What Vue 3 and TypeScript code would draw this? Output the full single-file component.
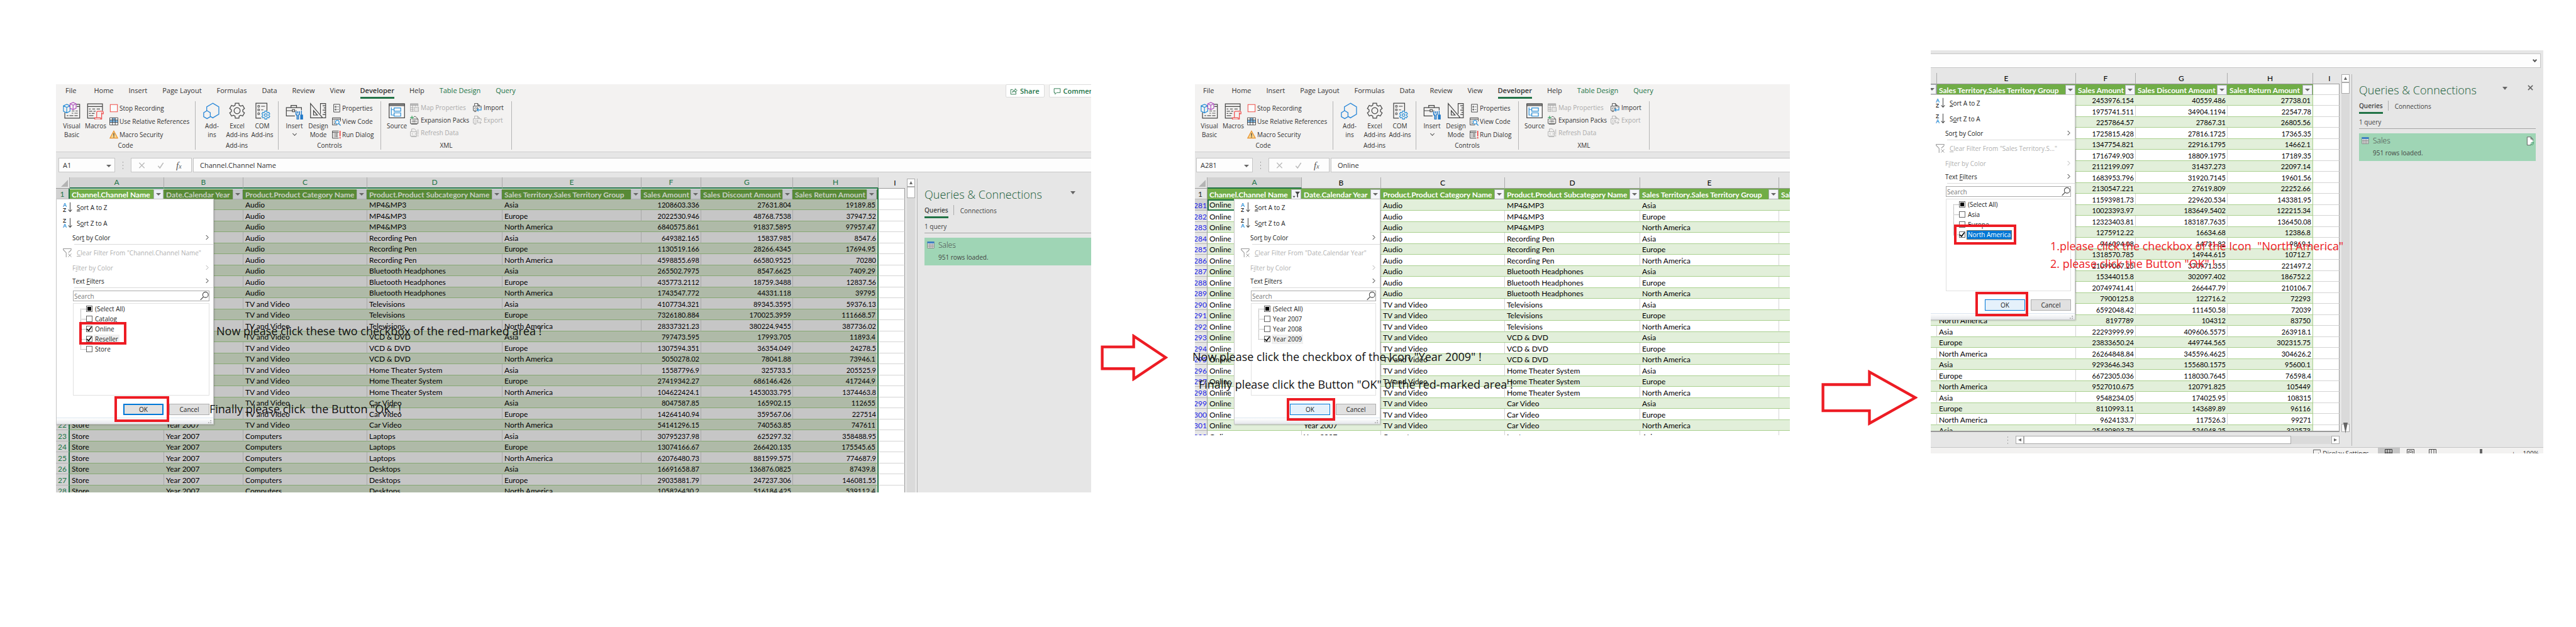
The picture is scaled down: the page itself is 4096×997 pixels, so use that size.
<script setup lang="ts">
interface SmallCommand { icon: string; label: string; off?: boolean }
interface BigCommand { icon: string; lines: string[]; caret?: boolean }
interface Group { name: string; cls: string; big: BigCommand[]; small: SmallCommand[][] }
interface Choice { label: string; state: 'on' | 'off' | 'mixed'; cls?: string }
interface Column { key: string; letter: string; title: string; num?: boolean; filtered?: boolean }
interface Row { head: string; cells: string[] }
interface Shot {
  id: string
  ribbon: boolean
  share: boolean
  nameBox: string
  formula: string
  columns: Column[]
  rows: Row[]
  pane: boolean
  spare: boolean
  footer: boolean
  clearText: string
  choices: Choice[]
  frames: string[]
  notes: string[]
}

const tabs = ['File', 'Home', 'Insert', 'Page Layout', 'Formulas', 'Data', 'Review', 'View', 'Developer', 'Help', 'Table Design', 'Query']

const groups: Group[] = [
  {
    name: 'Code', cls: 'g-code',
    big: [{ icon: 'vb', lines: ['Visual', 'Basic'] }, { icon: 'macros', lines: ['Macros'] }],
    small: [[
      { icon: 'stop', label: 'Stop Recording' },
      { icon: 'relative', label: 'Use Relative References' },
      { icon: 'warning', label: 'Macro Security' },
    ]],
  },
  {
    name: 'Add-ins', cls: 'g-addins',
    big: [
      { icon: 'addins', lines: ['Add-', 'ins'] },
      { icon: 'gear', lines: ['Excel', 'Add-ins'] },
      { icon: 'com', lines: ['COM', 'Add-ins'] },
    ],
    small: [],
  },
  {
    name: 'Controls', cls: 'g-controls',
    big: [{ icon: 'toolbox', lines: ['Insert'], caret: true }, { icon: 'design', lines: ['Design', 'Mode'] }],
    small: [[
      { icon: 'props', label: 'Properties' },
      { icon: 'code', label: 'View Code' },
      { icon: 'dialog', label: 'Run Dialog' },
    ]],
  },
  {
    name: 'XML', cls: 'g-xml',
    big: [{ icon: 'source', lines: ['Source'] }],
    small: [
      [
        { icon: 'map', label: 'Map Properties', off: true },
        { icon: 'packs', label: 'Expansion Packs' },
        { icon: 'refresh', label: 'Refresh Data', off: true },
      ],
      [
        { icon: 'import', label: 'Import' },
        { icon: 'export', label: 'Export', off: true },
      ],
    ],
  },
]

const allColumns: Column[] = [
  { key: 'a', letter: 'A', title: 'Channel.Channel Name' },
  { key: 'b', letter: 'B', title: 'Date.Calendar Year' },
  { key: 'c', letter: 'C', title: 'Product.Product Category Name' },
  { key: 'd', letter: 'D', title: 'Product.Product Subcategory Name' },
  { key: 'e', letter: 'E', title: 'Sales Territory.Sales Territory Group' },
  { key: 'f', letter: 'F', title: 'Sales Amount', num: true },
  { key: 'g', letter: 'G', title: 'Sales Discount Amount', num: true },
  { key: 'h', letter: 'H', title: 'Sales Return Amount', num: true },
]

const products: [string, string][] = [
  ['Audio', 'MP4&MP3'],
  ['Audio', 'Recording Pen'],
  ['Audio', 'Bluetooth Headphones'],
  ['TV and Video', 'Televisions'],
  ['TV and Video', 'VCD & DVD'],
  ['TV and Video', 'Home Theater System'],
  ['TV and Video', 'Car Video'],
  ['Computers', 'Laptops'],
  ['Computers', 'Desktops'],
]
const regions = ['Asia', 'Europe', 'North America']

const storeFigures = `1208603.336 27631.804 19189.85
2022530.946 48768.7538 37947.52
6840575.861 91837.5895 97957.47
649382.165 15837.985 8547.6
1130519.166 28266.4345 17694.95
4598855.698 66580.9525 70280
265502.7975 8547.6625 7409.29
435773.2112 18759.3488 12837.56
1743547.772 44331.118 39795
4107734.321 89345.3595 59376.13
7326180.884 170025.3959 111668.57
28337321.23 380224.9455 387736.02
797473.595 17993.705 11893.4
1307594.351 36354.049 24278.5
5050278.02 78041.88 73946.1
15587796.9 325733.5 205525.9
27419342.27 686146.426 417244.9
104622424.1 1453033.795 1374463.8
8047587.85 165902.15 112655
14264140.94 359567.06 227514
54141296.15 740563.85 747611
30795237.98 625297.32 358488.95
13074166.67 266420.135 175545.65
62076480.73 881599.575 774687.9
16691658.87 136876.0825 87439.8
29035881.79 247237.306 146081.55
105826430.2 516184.425 539112.4`

const regionFigures = `2453976.154 40559.486 27738.01
1975741.511 34904.1194 22547.78
2257864.57 27867.31 26805.56
1725815.428 27816.1725 17365.35
1347754.821 22916.1795 14662.1
1716749.903 18809.1975 17189.35
2112199.097 31437.273 22097.14
1683953.796 31920.7145 19601.56
2130547.221 27619.809 22252.66
11593981.73 229620.534 143381.95
10023393.97 183649.5402 122215.34
12323403.81 183187.7635 136450.08
1275912.22 16634.68 12386.8
946094.08 14731.82 9869.1
1318570.785 14944.615 10712.7
21099067.25 370971.355 221497.2
15344015.8 302097.402 186752.2
20749741.41 266447.79 210106.7
7900125.8 122716.2 72293
6592048.42 111450.58 72039
8197789 104312 83750
22293999.99 409606.5575 263918.1
23833650.24 449744.565 302315.75
26264848.84 345596.4625 304626.2
9293646.343 155680.1575 95600.1
6672305.036 118030.7645 76598.4
9527010.675 120791.825 105449
9548234.05 174025.95 108315
8110993.11 143689.89 96116
9624133.7 117526.3 99271
25430893.75 524948.25 322573`

const parse = (text: string): string[][] => text.split('\n').map((line) => line.split(' '))

const storeRows: Row[] = parse(storeFigures).map((figures, i) => {
  const [category, sub] = products[Math.floor(i / 3)]
  return { head: String(i + 2), cells: ['Store', 'Year 2007', category, sub, regions[i % 3], ...figures] }
})

const onlineRows: Row[] = Array.from({ length: 22 }, (_, i) => {
  const [category, sub] = products[Math.floor(i / 3)]
  return { head: String(281 + i), cells: ['Online', 'Year 2007', category, sub, regions[i % 3], ''] }
})

const regionRows: Row[] = parse(regionFigures).map((figures, i) => ({
  head: '',
  cells: [regions[i % 3], ...figures],
}))

const shots: Shot[] = [
  {
    id: 'one', ribbon: true, share: true, nameBox: 'A1', formula: 'Channel.Channel Name',
    columns: allColumns, rows: storeRows, pane: true, spare: true, footer: false,
    clearText: 'lear Filter From "Channel.Channel Name"',
    choices: [
      { label: '(Select All)', state: 'mixed' },
      { label: 'Catalog', state: 'off' },
      { label: 'Online', state: 'on' },
      { label: 'Reseller', state: 'on', cls: 'hover' },
      { label: 'Store', state: 'off' },
    ],
    frames: ['choice', 'confirm'],
    notes: ['Now please click these two checkbox of the red-marked area !', 'Finally please click  the Button "OK" !'],
  },
  {
    id: 'two', ribbon: true, share: false, nameBox: 'A281', formula: 'Online',
    columns: allColumns.slice(0, 6).map((c, i) => ({ ...c, filtered: i === 0 })),
    rows: onlineRows, pane: false, spare: false, footer: false,
    clearText: 'lear Filter From "Date.Calendar Year"',
    choices: [
      { label: '(Select All)', state: 'mixed' },
      { label: 'Year 2007', state: 'off' },
      { label: 'Year 2008', state: 'off' },
      { label: 'Year 2009', state: 'on', cls: 'hover' },
    ],
    frames: ['confirm'],
    notes: ['Now please click the checkbox of the Icon "Year 2009" !', 'Finally please click the Button "OK" of the red-marked area !'],
  },
  {
    id: 'three', ribbon: false, share: false, nameBox: '', formula: '',
    columns: allColumns.slice(4), rows: regionRows, pane: true, spare: true, footer: true,
    clearText: 'lear Filter From "Sales Territory.S..."',
    choices: [
      { label: '(Select All)', state: 'mixed' },
      { label: 'Asia', state: 'off' },
      { label: 'Europe', state: 'off' },
      { label: 'North America', state: 'on', cls: 'picked' },
    ],
    frames: ['choice', 'confirm'],
    notes: ['1.please click the checkbox of the Icon  "North America"', '2. please click the Button "OK" !'],
  },
]

function gearPath(cx: number, cy: number, outer: number, inner: number): string {
  const points: string[] = []
  for (let i = 0; i < 6; i++) {
    const mid = (i * 60 - 90) * (Math.PI / 180)
    const spread: [number, number][] = [[-0.36, inner], [-0.24, outer], [0.24, outer], [0.36, inner]]
    for (const [turn, r] of spread) {
      points.push(`${(cx + r * Math.cos(mid + turn)).toFixed(2)} ${(cy + r * Math.sin(mid + turn)).toFixed(2)}`)
    }
  }
  return `M${points.join('L')}Z`
}
const bigGear = gearPath(16, 16, 14, 10.5)
const smallGear = gearPath(22.5, 24, 7.5, 5.5)
</script>

<template>
  <main class="page">
    <svg class="defs" aria-hidden="true">
      <symbol id="i-vb" viewBox="0 0 32 32">
        <path d="M3.500 19V29.500H30.500V4.500H24M25 8.500H30.500" fill="none" stroke="#444" stroke-width="1.400" />
        <path d="M16 16.500h5M23 16.500h4M16 20.500h3M21 20.500h6M7 25h3M12 25h7M21 25h6" stroke="#555" stroke-width="1.200" />
        <path d="M7 4.500l6 2.500v10l-6 3-6-3V7z M1 7l6 3 6-3 M7 10v10" fill="#f3f2f1" stroke="#2b8fd6" stroke-width="1.400" />
        <path d="M18.500 1l5.500 2.500v8l-5.500 2.500-5.500-2.500v-8z M13 3.500l5.500 2.500 5.500-2.500 M18.500 6v8" fill="#f3f2f1" stroke="#b052c0" stroke-width="1.400" />
      </symbol>
      <symbol id="i-macros" viewBox="0 0 32 32">
        <path d="M15 29.500H1.500V3.500H28.500V16M1.500 8.500H28.500" fill="none" stroke="#444" stroke-width="1.400" />
        <path d="M4 13h3M10 13h5M18 13h6M4 17h6M12 17h4M4 21h3M9 21h5M4 25h8" stroke="#555" stroke-width="1.200" />
        <path d="M18 28V19q0-2 2-2h8q2 0 2 2.500v2h-3V31q0 1-1.500 1H16q-2 0-2-3h11q0 3 1.500 3M27 21.500V19" fill="none" stroke="#ee4a4a" stroke-width="1.400" />
      </symbol>
      <symbol id="i-addins" viewBox="0 0 32 32">
        <path d="M17.500 2.500l11 6.500v13.500l-11 6.500-11-6.500V9z" fill="none" stroke="#2b88d8" stroke-width="1.500" />
        <path d="M7 16l6 3.500v7.500l-6 3.500-6-3.500v-7.500z" fill="#f3f2f1" stroke="#2b88d8" stroke-width="1.500" />
      </symbol>
      <symbol id="i-gear" viewBox="0 0 32 32">
        <path :d="bigGear" fill="none" stroke="#444" stroke-width="1.400" />
        <circle cx="16" cy="16" r="5.500" fill="none" stroke="#444" stroke-width="1.400" />
      </symbol>
      <symbol id="i-com" viewBox="0 0 32 32">
        <path d="M14 29.500H4.500V2.500H24.500V16" fill="none" stroke="#444" stroke-width="1.400" />
        <path d="M8 6.500h3v3h-3zM8 13h3v3h-3zM8 20h3v3h-3z" fill="none" stroke="#444" stroke-width="1.100" />
        <path d="M14 8h7M14 14.500h4" stroke="#444" stroke-width="1.200" />
        <path :d="smallGear" fill="#f3f2f1" stroke="#2b8fd6" stroke-width="1.400" />
        <circle cx="22.500" cy="24" r="2.500" fill="none" stroke="#2b8fd6" stroke-width="1.300" />
      </symbol>
      <symbol id="i-toolbox" viewBox="0 0 32 32">
        <path d="M17 25.500H1.500V10.500H29V15M10 10.500V6.500H20V10.500M1.500 16h11M18 16h2M12.500 14h4v4h-4z" fill="none" stroke="#444" stroke-width="1.400" />
        <path d="M19 17v5q0 2 2 2v8h2.500v-8q2-.5 2-2.500v-4.500M22.200 17v4" fill="none" stroke="#1f78c8" stroke-width="1.800" />
        <path d="M29 16v8M27.500 24h3.500v7.500h-3.500z" fill="#1f78c8" stroke="#1f78c8" stroke-width="1.500" />
      </symbol>
      <symbol id="i-design" viewBox="0 0 32 32">
        <path d="M2 3V29H24Z M7.500 16V24H14.500Z" fill="none" stroke="#444" stroke-width="1.400" />
        <path d="M20 22V3H29.500V29H25M24 7h5M26 11h3M24 15h5M26 19h3M24 23h5" fill="none" stroke="#444" stroke-width="1.300" />
      </symbol>
      <symbol id="i-source" viewBox="0 0 32 32">
        <path d="M2 3.500H30V29H2Z" fill="#fafafa" stroke="#444" stroke-width="1.400" />
        <path d="M2 3.500H30V7H2Z" fill="#888" stroke="#444" />
        <path d="M6 10v14h5M6 14h5M11 11h12v6h-12zM11 20h12v6h-12z" fill="none" stroke="#2b8fd6" stroke-width="1.400" />
      </symbol>
      <symbol id="i-stop" viewBox="0 0 16 16"><path d="M1.500 1.500h13v13h-13z" fill="#fbfbfb" stroke="#f0504a" stroke-width="1.200" /></symbol>
      <symbol id="i-relative" viewBox="0 0 16 16">
        <path d="M.5 1.500h15v13H.5z" fill="#fff" />
        <path d="M.5 5.500h15v4.500H.5zM5.500 1.500h5v4h-5z" fill="#83beec" />
        <path d="M.5 1.500h15v13H.5zM.5 5.500h15M.5 10h15M5.500 1.500v13M10.500 1.500v13" fill="none" stroke="#333" />
      </symbol>
      <symbol id="i-warning" viewBox="0 0 16 16">
        <path d="M8 1.500L15 14.500H1z" fill="#fbd58a" stroke="#e8912d" stroke-width="1.300" />
        <path d="M8 5.500v5M8 11.500v1.500" stroke="#333" stroke-width="1.400" />
      </symbol>
      <symbol id="i-props" viewBox="0 0 16 16">
        <path d="M3 1h11v14H3z" fill="#fafafa" stroke="#444" stroke-width="1.100" />
        <path d="M5.500 4.500h2v2h-2zM5.500 9.500h2v2h-2zM9.500 5.500h2.500M9.500 10.500h2.500" fill="none" stroke="#444" />
      </symbol>
      <symbol id="i-code" viewBox="0 0 16 16">
        <path d="M15.500 8V1.500H.5v13h9M.5 4h15M3 7h2M3 9.500h1.500M3 12h2.500" fill="none" stroke="#444" stroke-width="1.100" />
        <circle cx="9.500" cy="9.500" r="3.300" fill="#fafafa" stroke="#2b8fd6" stroke-width="1.300" />
        <path d="M12 12l3.500 3.500" stroke="#2b8fd6" stroke-width="1.500" />
      </symbol>
      <symbol id="i-dialog" viewBox="0 0 16 16">
        <path d="M12 1.500H.5v13h11.500M.5 4H12M3 6.500h1.500M5.500 6.500h5M3 9h1.500M5.500 9h5M3 11.500h1.500M5.500 11.500h5" fill="none" stroke="#444" stroke-width="1.100" />
        <path d="M14.500 1v10M14.500 12.500v2.500" stroke="#ee3b3b" stroke-width="1.800" />
      </symbol>
      <symbol id="i-map" viewBox="0 0 16 16">
        <path d="M.5 1h14v3H.5z" fill="#bbb" />
        <path d="M7 15H.5V1h14v5M.5 4h14M.5 8h6M.5 11.500h6M4.500 4v11M9.500 4v2M8 7.500h7.500V15H8zM10 10h1M12.500 10h1.500M10 12.500h1M12.500 12.500h1.500" fill="none" stroke="#a5a5a5" />
      </symbol>
      <symbol id="i-packs" viewBox="0 0 16 16">
        <path d="M7 1.500h3l3 3V6M.5 6H2M4 6h10.500v8H.5V6M2 15.500h11" fill="none" stroke="#444" />
        <path d="M5 8.500L3.500 10 5 11.500M10 8.500l1.500 1.500L10 11.500" fill="none" stroke="#444" />
        <circle cx="7.500" cy="10" r="1.300" fill="none" stroke="#444" />
        <path d="M3.500 0v6.500M.3 3.300h6.500" stroke="#2e9b57" stroke-width="1.200" />
      </symbol>
      <symbol id="i-refresh" viewBox="0 0 16 16">
        <path d="M3 6V1h5l3 3v2M.5 6H12v8H.5zM2 15.500h10M14.500 2v9M14.500 12v3" fill="none" stroke="#aaa" />
        <path d="M5 8.500L3.500 10 5 11.500M9 8.500l1.500 1.500L9 11.500" fill="none" stroke="#aaa" />
      </symbol>
      <symbol id="i-import" viewBox="0 0 16 16">
        <path d="M3 5V.5h5.500L12 4v1M8.500.5V4H12M7 13.500H.5V5.500h14.500V9M2 15.500h4" fill="none" stroke="#444" />
        <path d="M5 7.500L3 9.500l2 2M12 7.500l1 1" fill="none" stroke="#444" />
        <circle cx="8" cy="9.500" r="1.300" fill="none" stroke="#444" />
        <path d="M15 8v4.500H7.500M10 10l-2.500 2.500L10 15" fill="none" stroke="#2b8fd6" stroke-width="1.300" />
      </symbol>
      <symbol id="i-export" viewBox="0 0 16 16">
        <path d="M3 5V.5h5.500L12 4v1M8.500.5V4H12M7 13.500H.5V5.500h14.500V9M2 15.500h4" fill="none" stroke="#aaa" />
        <path d="M5 7.500L3 9.500l2 2" fill="none" stroke="#aaa" />
        <circle cx="8" cy="9.500" r="1.300" fill="none" stroke="#aaa" />
        <path d="M7.500 12.500H15M12.500 10l2.500 2.500-2.500 2.500" fill="none" stroke="#aaa" />
      </symbol>
      <symbol id="i-share" viewBox="0 0 16 16">
        <path d="M6 4.500H1.500v10h11V10M5 10.500q.5-5 6-5V2.500L15 6.500l-4 4V8q-4 0-6 2.500z" fill="none" stroke="#217346" stroke-width="1.200" />
      </symbol>
      <symbol id="i-comment" viewBox="0 0 16 16">
        <path d="M1.500 2.500h13v8.500H7L3.500 14.500V11h-2z" fill="none" stroke="#217346" stroke-width="1.200" />
      </symbol>
      <symbol id="i-arrowdown" viewBox="0 0 8 20"><path d="M4 1v17M.7 14.500L4 18.300l3.300-3.800" fill="none" stroke="#444" stroke-width="1.200" /></symbol>
      <symbol id="i-clear" viewBox="0 0 16 18">
        <path d="M14 5.500L15 3.500V1.500H.8v2L6 9v8M10 8.500L14 5" fill="none" stroke="#999" stroke-width="1.200" />
        <path d="M9.500 10.500l6 6M15.500 10.500l-6 6" stroke="#999" stroke-width="1.100" />
      </symbol>
      <symbol id="i-chevron" viewBox="0 0 6 10"><path d="M.8.8L5 5 .8 9.200" fill="none" stroke="currentColor" stroke-width="1.200" /></symbol>
      <symbol id="i-search" viewBox="0 0 16 16">
        <circle cx="10" cy="6" r="5" fill="none" stroke="#444" stroke-width="1.200" />
        <path d="M6.500 9.500L.8 15.300" stroke="#444" stroke-width="1.400" />
      </symbol>
      <symbol id="i-table" viewBox="0 0 14 14">
        <path d="M.5.5h13v13H.5z" fill="#fff" stroke="#666" />
        <path d="M0 0h14v4H0z" fill="#3f7fc4" />
        <path d="M.5 7h13M.5 10h13M4 4v9.500M7 4v9.500M10 4v9.500" stroke="#777" />
      </symbol>
      <symbol id="i-page" viewBox="0 0 14 18">
        <path d="M8 16.500H.8V1h7l4 4v3M7.800 1v4h4" fill="#fff" stroke="#555" stroke-width="1.100" />
        <path d="M13 10.500v2.500h-2.500M7.500 17v-2.500H10M7.500 12.800q2.500-3 5.300 0M7.700 14.700q2.500 3 5.300 0" fill="none" stroke="#4f9f74" stroke-width="1.200" />
      </symbol>
      <symbol id="i-funnel" viewBox="0 0 14 12">
        <path d="M5 .5h9L10.500 5v6.500L8.500 10V5z" fill="#444" />
        <path d="M.5 8.500h5L3 11.500z" fill="#444" />
      </symbol>
    </svg>

    <figure v-for="shot in shots" :key="shot.id" class="shot" :class="`shot-${shot.id}`">
      <div class="window">
        <header v-if="shot.ribbon" class="ribbon">
          <nav class="tabs">
            <button v-for="tab in tabs" :key="tab" type="button" class="tab"
              :class="{ current: tab === 'Developer', context: tab === 'Table Design' || tab === 'Query' }">{{ tab }}</button>
            <div v-if="shot.share" class="share">
              <button type="button"><svg><use href="#i-share" /></svg>Share</button>
              <button type="button"><svg><use href="#i-comment" /></svg>Comments</button>
            </div>
          </nav>
          <div class="groups">
            <section v-for="group in groups" :key="group.name" class="group" :class="group.cls">
              <div class="commands">
                <button v-for="b in group.big" :key="b.icon" type="button" class="big">
                  <svg><use :href="`#i-${b.icon}`" /></svg>
                  <span v-for="line in b.lines" :key="line">{{ line }}</span>
                  <i v-if="b.caret" class="angle"></i>
                </button>
                <div v-for="(stack, n) in group.small" :key="n" class="stack">
                  <button v-for="s in stack" :key="s.icon" type="button" class="small" :class="{ off: s.off }" :disabled="s.off">
                    <svg><use :href="`#i-${s.icon}`" /></svg>{{ s.label }}
                  </button>
                </div>
              </div>
              <h2>{{ group.name }}</h2>
            </section>
          </div>
        </header>

        <div class="formula-bar">
          <template v-if="shot.ribbon">
            <div class="name-box">
              <input type="text" :value="shot.nameBox" aria-label="Name box" readonly />
              <button type="button" aria-label="Cell names"><i class="caret"></i></button>
            </div>
            <span class="dots"><b></b><b></b><b></b></span>
            <div class="fx">
              <button type="button" aria-label="Cancel entry">
                <svg viewBox="0 0 12 12"><path d="M1 1l10 10M11 1L1 11" fill="none" stroke="#bbb" stroke-width="1.600" /></svg>
              </button>
              <button type="button" aria-label="Accept entry">
                <svg viewBox="0 0 12 12"><path d="M1 7l3.500 4L11 1" fill="none" stroke="#bbb" stroke-width="1.900" /></svg>
              </button>
              <button type="button" class="fn">f<sub>x</sub></button>
            </div>
          </template>
          <div class="formula">
            <input type="text" :value="shot.formula" aria-label="Formula" readonly />
            <button v-if="!shot.ribbon" type="button" aria-label="Expand formula bar"><i class="angle"></i></button>
          </div>
        </div>

        <div class="work">
          <div class="sheet">
            <div class="cells">
              <table>
                <colgroup>
                  <col class="w-head" />
                  <col v-for="c in shot.columns" :key="c.key" :class="`w-${c.key}`" />
                  <col v-if="shot.spare" class="w-spare" />
                </colgroup>
                <thead>
                  <tr class="letters">
                    <th class="corner"><i v-if="shot.ribbon"></i></th>
                    <th v-for="c in shot.columns" :key="c.key" :class="`l-${c.key}`">{{ c.letter }}</th>
                    <th v-if="shot.spare" class="spare">I</th>
                  </tr>
                  <tr class="titles">
                    <th class="num-head">
                      <template v-if="shot.ribbon">1</template>
                      <button v-else type="button" class="drop" aria-label="Filter"><i class="caret"></i></button>
                    </th>
                    <th v-for="c in shot.columns" :key="c.key" :class="`t-${c.key}`">
                      <div class="title-cell">
                        <span>{{ c.title }}</span>
                        <button type="button" class="drop" :aria-label="`Filter ${c.title}`">
                          <svg v-if="c.filtered"><use href="#i-funnel" /></svg>
                          <i v-else class="caret"></i>
                        </button>
                      </div>
                    </th>
                    <td v-if="shot.spare" class="spare"></td>
                  </tr>
                </thead>
                <tbody>
                  <tr v-for="(row, r) in shot.rows" :key="r">
                    <th class="num-head">{{ row.head }}</th>
                    <td v-for="(cell, n) in row.cells" :key="n" :class="{ num: shot.columns[n].num }">{{ cell }}</td>
                    <td v-if="shot.spare" class="spare"></td>
                  </tr>
                </tbody>
              </table>
            </div>
            <div v-if="shot.footer" class="hscroll">
              <span class="dots"><b></b><b></b><b></b></span>
              <button type="button" aria-label="Scroll left"><i class="tri left"></i></button>
              <div class="track"><div class="thumb"></div></div>
              <button type="button" aria-label="Scroll right"><i class="tri right"></i></button>
            </div>
          </div>
          <template v-if="shot.pane">
            <div class="vscroll">
              <button type="button" aria-label="Scroll up"><i class="tri up"></i></button>
              <div class="track"><div class="thumb"></div></div>
              <button v-if="shot.footer" type="button" aria-label="Scroll down"><i class="tri down"></i></button>
            </div>
            <aside class="pane">
              <div class="pane-head">
                <h1>Queries &amp; Connections</h1>
                <button type="button" class="pane-menu" aria-label="Pane options"><i class="caret"></i></button>
                <button v-if="shot.footer" type="button" class="pane-close" aria-label="Close pane">
                  <svg viewBox="0 0 10 10"><path d="M1 1l8 8M9 1L1 9" fill="none" stroke="#666" stroke-width="1.800" /></svg>
                </button>
              </div>
              <div class="pane-tabs">
                <button type="button" class="on">Queries</button>
                <button type="button">Connections</button>
              </div>
              <p class="count">1 query</p>
              <div class="query">
                <svg class="grid-icon"><use href="#i-table" /></svg>
                <div><strong>Sales</strong><p>951 rows loaded.</p></div>
                <svg v-if="shot.footer" class="page-icon"><use href="#i-page" /></svg>
              </div>
            </aside>
          </template>
        </div>

        <footer v-if="shot.footer" class="status">
          <span class="display">
            <svg viewBox="0 0 14 12"><path d="M6 11.500H.5V.5h13v5M7 8h3M10 6v4M8 10h4" fill="none" stroke="#444" /></svg>
            Display Settings
          </span>
          <button type="button" class="view on" aria-label="Normal view">
            <svg viewBox="0 0 12 12"><path d="M.5.5h11v11H.5zM.5 6h11M4 .5v11M8 .5v11" fill="none" stroke="#333" /></svg>
          </button>
          <button type="button" class="view" aria-label="Page layout view">
            <svg viewBox="0 0 12 12"><path d="M.5.5h11v11H.5zM3 3h6v8.500H3zM4.500 5.500h3M4.500 8h3" fill="none" stroke="#444" /></svg>
          </button>
          <button type="button" class="view" aria-label="Page break view">
            <svg viewBox="0 0 12 12"><path d="M.5 12V.5h11V12M4 .5V9M8 .5V9" fill="none" stroke="#444" /></svg>
          </button>
          <span class="zoom"><span>−</span><i></i><span>+</span></span>
          <span>100%</span>
        </footer>

        <div class="menu" role="menu">
          <button type="button" class="item sort"><span class="az"><b class="blue">A</b><b>Z</b></span><svg class="down"><use href="#i-arrowdown" /></svg><span><u>S</u>ort A to Z</span></button>
          <button type="button" class="item sort"><span class="az"><b>Z</b><b class="blue">A</b></span><svg class="down"><use href="#i-arrowdown" /></svg><span>S<u>o</u>rt Z to A</span></button>
          <button type="button" class="item sub"><span>Sor<u>t</u> by Color</span><svg><use href="#i-chevron" /></svg></button>
          <hr />
          <button type="button" class="item clear" disabled><svg class="funnel"><use href="#i-clear" /></svg><span><u>C</u>{{ shot.clearText }}</span></button>
          <button type="button" class="item sub faded" disabled><span>F<u>i</u>lter by Color</span><svg><use href="#i-chevron" /></svg></button>
          <button type="button" class="item sub"><span>Text <u>F</u>ilters</span><svg><use href="#i-chevron" /></svg></button>
          <hr />
          <label class="search"><input type="text" placeholder="Search" aria-label="Search" /><svg><use href="#i-search" /></svg></label>
          <ul class="choices">
            <li v-for="c in shot.choices" :key="c.label">
              <label :class="c.cls"><input type="checkbox" :class="c.state" :checked="c.state === 'on'" /><span>{{ c.label }}</span></label>
            </li>
          </ul>
          <div class="actions">
            <button type="button" class="ok">OK</button>
            <button type="button">Cancel</button>
          </div>
          <div class="grip"><svg viewBox="0 0 6 6"><path d="M4 0h2v2H4zM4 4h2v2H4zM0 4h2v2H0z" fill="#aaa" /></svg></div>
        </div>
      </div>
      <div v-for="f in shot.frames" :key="f" class="frame" :class="`frame-${f}`"></div>
      <p v-for="(note, n) in shot.notes" :key="n" class="note" :class="`note-${n + 1}`">{{ note }}</p>
    </figure>

    <svg class="arrow arrow-one" viewBox="0 0 124 87">
      <path d="M3 24H61V4L120 43.500 61 83V64H3Z" fill="none" stroke="#ed1c24" stroke-width="5" />
    </svg>
    <svg class="arrow arrow-two" viewBox="0 0 176 102">
      <path d="M3 27H88V4L172 51 88 98V75H3Z" fill="none" stroke="#ed1c24" stroke-width="5" />
    </svg>
  </main>
</template>

<style>
html,
body {
  margin: 0;
  background: #fff;
}
</style>

<style scoped>
.page {
  display: grid;
  grid-template-columns: 89fr 1646fr 165fr 946fr 224fr 974fr 52fr;
  grid-template-rows: minmax(0, 80fr) minmax(0, 54fr) minmax(0, 558fr) minmax(0, 29fr) minmax(0, 62fr) minmax(0, 214fr);
  height: 100vh;
  overflow: hidden;
  font-family: "Open Sans", "Noto Sans", sans-serif;
  font-size: 10px;
  line-height: 14px;
  color: #333;
}
.page * {
  box-sizing: border-box;
}
.defs {
  position: absolute;
  width: 0;
  height: 0;
}
button,
input {
  margin: 0;
  padding: 0;
  border: 0;
  border-radius: 0;
  background: none;
  font: inherit;
  color: inherit;
}
h1,
h2,
p,
ul,
figure {
  margin: 0;
  padding: 0;
}
.shot {
  position: relative;
  min-width: 0;
}
.shot-one { grid-area: 3 / 2 / 6 / 3; }
.shot-two { grid-area: 3 / 4 / 4 / 5; }
.shot-three { grid-area: 2 / 6 / 5 / 7; }
.window {
  position: relative;
  display: flex;
  flex-direction: column;
  height: 100%;
  overflow: hidden;
  background: #e6e6e6;
}

/* ribbon */
.ribbon {
  height: 108px;
  flex: none;
  background: #f3f2f1;
  border-bottom: 1px solid #cfcfcf;
}
.shot-two .ribbon,
.shot-two .formula-bar,
.shot-two .cells {
  margin-left: -2px;
}
.tabs {
  display: flex;
  gap: 24px;
  height: 23px;
  padding-left: 15px;
  font-size: 11px;
}
.tab {
  flex: none;
  border-bottom: 3px solid transparent;
  line-height: 20px;
  white-space: nowrap;
}
.tab:first-child {
  margin-right: 4px;
}
.tab.current {
  font-weight: 600;
  border-color: #217346;
}
.tab.context {
  color: #217346;
}
.share {
  display: flex;
  flex: none;
  gap: 7px;
  width: 136px;
  height: 21px;
  margin-left: auto;
}
.share button {
  display: flex;
  flex: none;
  align-items: center;
  gap: 4px;
  padding: 0 7px 0 6px;
  border: 1px solid #dcdcdc;
  border-radius: 2px;
  background: #fff;
  color: #217346;
  font-weight: 600;
}
.share svg {
  width: 12px;
  height: 12px;
}
.groups {
  display: flex;
  padding-top: 4px;
}
.group {
  display: flex;
  flex-direction: column;
  justify-content: space-between;
  height: 77px;
  border-right: 1px solid #b5b5b5;
}
.g-code { width: 222px; }
.g-addins { width: 132px; }
.g-controls { width: 163px; }
.g-xml { width: 208px; }
.group h2 {
  height: 11px;
  font-size: 10px;
  font-weight: 400;
  line-height: 8px;
  text-align: center;
}
.commands {
  display: flex;
  padding-left: 6px;
}
.big {
  display: flex;
  flex: none;
  flex-direction: column;
  align-items: center;
  width: 38px;
  line-height: 14px;
  white-space: nowrap;
}
.g-addins .big {
  width: 40px;
}
.big svg {
  width: 28px;
  height: 28px;
  margin: 1px 0 3px;
}
.angle {
  width: 5px;
  height: 5px;
  margin-top: 3px;
  border: solid #555;
  border-width: 0 1px 1px 0;
  transform: rotate(45deg);
}
.stack {
  display: flex;
  flex: none;
  flex-direction: column;
  padding-left: 3px;
}
.g-xml .stack {
  width: 100px;
  padding-left: 2px;
}
.g-xml .stack:last-child {
  width: 60px;
}
.small {
  display: flex;
  align-items: center;
  gap: 2px;
  height: 21px;
  white-space: nowrap;
}
.g-xml .small {
  height: 20px;
  gap: 3px;
}
.small svg {
  width: 14px;
  height: 14px;
  flex: none;
}
.off {
  color: #ababab;
}

/* formula bar */
.formula-bar {
  display: flex;
  flex: none;
  height: 40px;
  padding: 9px 0 8px 4px;
  font-size: 11px;
}
.shot-three .formula-bar {
  height: 36px;
  padding: 5px 4px 8px 0;
}
.name-box,
.fx,
.formula {
  display: flex;
  align-items: center;
  border: 1px solid #c6c6c6;
  background: #fdfdfd;
}
.name-box {
  width: 90px;
}
.name-box input {
  flex: 1;
  min-width: 0;
  padding-left: 6px;
}
.name-box button {
  width: 18px;
}
.caret {
  display: inline-block;
  border: solid transparent;
  border-width: 4px 4px 0;
  border-top-color: #666;
  vertical-align: middle;
}
.dots {
  display: flex;
  flex-direction: column;
  justify-content: center;
  align-items: center;
  gap: 3px;
  width: 25px;
}
.dots b {
  width: 1px;
  height: 2px;
  background: #a5a5a5;
}
.fx {
  width: 97px;
  justify-content: space-around;
  padding: 0 6px 0 2px;
  margin-right: 2px;
}
.fx svg {
  display: block;
  width: 11px;
  height: 10px;
}
.fn {
  font: italic 15px/18px "Liberation Serif", serif;
  color: #555;
}
.fn sub {
  font-size: 10px;
  line-height: 0;
  vertical-align: baseline;
}
.formula {
  flex: 1;
  min-width: 0;
  border-right: 0;
}
.shot-three .formula {
  border-left: 0;
  border-right: 1px solid #c6c6c6;
}
.formula input {
  flex: 1;
  padding-left: 10px;
}
.formula button {
  width: 16px;
}
.formula .angle {
  display: block;
  margin: 0 0 3px 5px;
  border-width: 0 2px 2px 0;
}

/* worksheet */
.work {
  display: flex;
  flex: 1;
  min-height: 0;
}
.sheet {
  display: flex;
  flex-direction: column;
  min-width: 0;
}
.cells {
  flex: 1;
  min-height: 0;
  overflow: hidden;
}
.shot-three .cells {
  border-bottom: 2px solid #999;
}
table {
  width: 0;
  table-layout: fixed;
  border-collapse: separate;
  border-spacing: 0;
  font: 12px/15px Lato, "Open Sans", sans-serif;
  color: #000;
}
.w-head { width: 22px; }
.shot-three .w-head { width: 10px; }
.w-a { width: 150px; }
.w-b { width: 126px; }
.w-c { width: 197px; }
.w-d { width: 215px; }
.w-e { width: 221px; }
.w-f { width: 95px; }
.w-g { width: 146px; }
.w-h { width: 136px; }
.w-spare { width: 42px; }
th,
td {
  height: 17px;
  padding: 1px 3px 0;
  overflow: hidden;
  font-weight: 400;
  text-align: left;
  white-space: nowrap;
}
.letters th {
  height: 18px;
  padding: 0;
  border-right: 1px solid #ababab;
  border-bottom: 1px solid #999;
  background: #e6e6e6;
  text-align: center;
  line-height: 16px;
}
.letters .spare {
  padding-left: 10px;
  border-right: 0;
}
.corner i {
  display: block;
  width: 11px;
  height: 11px;
  margin: 2px 0 0 8px;
  background: #b3b3b3;
  clip-path: polygon(100% 0, 100% 100%, 0 100%);
}
.titles th {
  padding-top: 0;
  background: #70ad47;
  color: #fff;
  font-weight: 700;
}
.titles th:not(.num-head) {
  padding-right: 1px;
}
.title-cell {
  display: flex;
  align-items: center;
  justify-content: space-between;
  height: 17px;
  padding-top: 1px;
}
.drop {
  display: flex;
  flex: none;
  align-items: center;
  justify-content: center;
  width: 16px;
  height: 16px;
  border: 1px solid #a9abb5;
  background: #f4f5f9;
}
.drop svg {
  width: 12px;
  height: 11px;
}
.num-head {
  padding: 1px 0 0;
  border-right: 1px solid #999;
  border-bottom: 1px solid #b5b5b5;
  background: #e6e6e6;
  text-align: center;
}
.titles .num-head {
  background: #e6e6e6;
  color: #222;
  font-weight: 400;
}
tbody tr:nth-child(even) > * {
  height: 18px;
}
td {
  border-bottom: 1px solid #a9d08e;
}
.num {
  font-size: 11px;
  text-align: right;
}
tbody tr:nth-child(odd) td {
  background: #e2efda;
}
tbody tr:nth-child(even) td {
  border-right: 1px solid #d4d4d4;
  background: #fff;
}
tbody tr:nth-child(even) td.num {
  padding-right: 2px;
}
.page td.spare,
.page tbody tr td.spare {
  border-right: 1px solid #999;
  border-bottom: 1px solid #d4d4d4;
  background: #fff;
}

.shot-one .letters th:not(.spare):not(.corner) {
  border-bottom: 2px solid #217346;
  background: #d2d2d2;
  color: #217346;
}
.shot-one .titles th:not(.num-head) {
  background: #588a37;
  color: #c8cfc3;
  box-shadow: inset 0 1px #fff;
}
.shot-one .titles .t-a:not(.num-head) {
  background: #70ad47;
  color: #fff;
}
.shot-one .drop {
  background: #c4c6c9;
}
.shot-one .t-a .drop {
  background: #eceff7;
}
.shot-one .num-head {
  border-right: 2px solid #217346;
  background: #d2d2d2;
  color: #217346;
}
.shot-one tbody td {
  border-bottom-color: #86a873;
}
.shot-one tbody tr:nth-child(odd) td:not(.spare) {
  background: #afbaa8;
}
.shot-one tbody tr:nth-child(even) td:not(.spare) {
  border-right-color: #a9a9a9;
  background: #c6c6c6;
}
.shot-one .t-h,
.shot-one tbody tr td:nth-last-child(2) {
  border-right: 2px solid #217346;
  box-shadow: inset -1px 0 #fff;
}
.shot-one tbody tr:nth-child(even) td:not(.spare):nth-last-child(2) {
  border-right: 2px solid #217346;
}
.shot-two tbody .num-head {
  color: #1a1ae6;
}
.shot-two .letters .l-a {
  border-bottom: 2px solid #217346;
  background: #d2d2d2;
  color: #217346;
}
.shot-two tbody tr:first-child .num-head {
  background: #d2d2d2;
}
.shot-two tbody tr:first-child td:nth-child(2) {
  border-bottom: 2px solid #217346;
  box-shadow: inset 2px 2px #217346;
}
.shot-three .titles .num-head {
  background: #70ad47;
}
.shot-three .num-head .drop {
  width: 9px;
  border-left: 0;
}
.shot-three .num-head .caret {
  margin-left: -4px;
}
.shot-three tbody .num-head {
  border-right-color: #d4d4d4;
  border-bottom-color: #a9d08e;
  background: #fff;
}
.shot-three tbody tr:nth-child(odd) .num-head {
  border-right: 0;
  background: #e2efda;
}
.shot-three tbody tr td:nth-last-child(2) {
  border-right: 1px solid #a9d08e;
}

/* scroll bars */
.vscroll {
  display: flex;
  flex-direction: column;
  width: 13px;
  margin: 2px 3px 0;
}
.shot-three .vscroll {
  margin-bottom: 24px;
}
.vscroll button,
.hscroll button {
  display: flex;
  flex: none;
  align-items: center;
  justify-content: center;
  width: 13px;
  height: 13px;
  border: 1px solid #ababab;
  background: #fff;
}
.track {
  flex: 1;
  background: #dadada;
}
.thumb {
  border: 1px solid #ababab;
  background: #fff;
}
.vscroll .thumb {
  height: 18px;
}
.tri {
  width: 5px;
  height: 5px;
  background: #666;
}
.up { clip-path: polygon(50% 0, 100% 100%, 0 100%); }
.tri.down { margin: 0; clip-path: polygon(0 0, 100% 0, 50% 100%); }
.left { clip-path: polygon(100% 0, 100% 100%, 0 50%); }
.right { clip-path: polygon(0 0, 100% 50%, 0 100%); }
.hscroll {
  display: flex;
  flex: none;
  height: 24px;
  padding: 6px 0 5px 110px;
}
.hscroll .track {
  display: flex;
}
.hscroll .thumb {
  width: 87%;
}

/* queries pane */
.pane {
  flex: 1;
  min-width: 0;
  margin-top: 2px;
  padding: 12px 0 0 11px;
  border-left: 1px solid #b5b5b5;
  color: #444;
}
.shot-three .pane {
  margin-bottom: 2px;
  padding-right: 12px;
}
.pane-head {
  display: flex;
  height: 28px;
}
.pane-head h1 {
  flex: 1;
  font-size: 18px;
  font-weight: 300;
  line-height: 26px;
  color: #185c37;
  white-space: nowrap;
}
.pane-head button {
  height: 18px;
}
.pane-menu {
  width: 8px;
  margin-right: 25px;
}
.pane-menu .caret {
  border-width: 5px 4px 0;
}
.shot-three .pane-menu {
  margin-right: 32px;
}
.pane-close {
  width: 9px;
  margin-right: 4px;
}
.pane-close svg {
  display: block;
  width: 9px;
  height: 9px;
}
.pane-tabs {
  display: flex;
  gap: 19px;
  height: 24px;
  margin-top: 1px;
  padding-top: 2px;
}
.pane-tabs button {
  position: relative;
  height: 20px;
  line-height: 15px;
  padding-bottom: 3px;
}
.pane-tabs .on {
  font-weight: 600;
  border-bottom: 3px solid #217346;
}
.pane-tabs .on::after {
  position: absolute;
  top: -1px;
  right: -9px;
  width: 1px;
  height: 16px;
  background: #ababab;
  content: "";
}
.count {
  height: 18px;
  margin-top: 4px;
  border-bottom: 1px solid #a5a5a5;
}
.query {
  display: flex;
  gap: 6px;
  height: 44px;
  margin-top: 7px;
  padding: 5px 2px 0 4px;
  background: #9fd5b5;
}
.query > div {
  flex: 1;
}
.query strong {
  display: block;
  font-size: 12px;
  font-weight: 300;
}
.query p {
  margin-top: 5px;
}
.grid-icon {
  width: 12px;
  height: 11px;
  margin-top: 1px;
}
.page-icon {
  width: 13px;
  height: 15px;
}

/* status bar */
.status {
  display: flex;
  flex: none;
  height: 10px;
  padding: 2px 7px 0 0;
  justify-content: flex-end;
  border-top: 1px solid #c6c6c6;
  background: #f3f2f1;
  overflow: hidden;
}
.display {
  display: flex;
  gap: 3px;
  margin-right: 14px;
}
.status svg {
  width: 12px;
  height: 12px;
}
.view {
  display: flex;
  flex: none;
  justify-content: center;
  width: 35px;
  height: 12px;
}
.view.on {
  margin-top: -2px;
  padding-top: 2px;
  background: #c6c6c6;
}
.zoom {
  display: flex;
  justify-content: space-between;
  width: 109px;
  margin: 0 12px 0 5px;
}
.zoom i {
  width: 4px;
  height: 10px;
  background: #666;
}

/* filter menu */
.menu {
  position: absolute;
  width: 233px;
  background: #fff;
  border: 1px solid #c6c6c6;
  box-shadow: 1px 1px 2px #0003;
  color: #222;
}
.shot-one .menu { top: 182px; left: 0; width: 251px; }
.shot-two .menu { top: 182px; left: 62px; }
.shot-three .menu { top: 70px; left: -3px; }
.item {
  display: flex;
  align-items: center;
  width: 100%;
  text-align: left;
  white-space: nowrap;
}
.sort {
  height: 25px;
  padding-left: 10px;
}
.az {
  display: flex;
  flex-direction: column;
  width: 8px;
  font-size: 9px;
  line-height: 8px;
}
.az b {
  font-weight: 600;
}
.blue {
  color: #2b8fd6;
}
.down {
  width: 7px;
  height: 17px;
  margin-right: 7px;
}
.item.sub {
  justify-content: space-between;
  height: 21px;
  padding: 0 7px 0 25px;
}
.sub svg {
  width: 5px;
  height: 9px;
}
hr {
  height: 1px;
  margin: 0 0 0 28px;
  border: 0;
  background: #dadada;
}
.clear {
  gap: 8px;
  height: 26px;
  padding-left: 10px;
  color: #b0b0b0;
}
.faded {
  color: #b0b0b0;
}
.funnel {
  width: 14px;
  height: 16px;
}
.search {
  display: flex;
  height: 17px;
  margin: 4px 6px 3px 26px;
  border: 1px solid #ababab;
}
.search input {
  flex: 1;
  min-width: 0;
  padding-left: 1px;
}
.search input::placeholder {
  color: #767676;
}
.search svg {
  width: 14px;
  height: 15px;
}
.choices {
  height: 147px;
  margin: 0 6px 0 26px;
  border: 1px solid #e1e1e1;
  list-style: none;
}
.choices li {
  display: flex;
  height: 16px;
  padding-left: 11px;
}
.choices li::before {
  width: 9px;
  height: 16px;
  background:
    repeating-linear-gradient(90deg, #888 0 1px, transparent 1px 2px) 0 8px / 100% 1px no-repeat,
    repeating-linear-gradient(#888 0 1px, transparent 1px 2px) 0 0 / 1px 100% no-repeat;
  content: "";
}
.choices li:first-child::before {
  height: 8px;
  margin-top: 8px;
  background-position: 0 0;
}
.choices li:last-child::before {
  height: 9px;
}
.choices label {
  display: flex;
  align-items: center;
  gap: 2px;
  height: 16px;
}
.choices span {
  padding: 0 2px;
  line-height: 15px;
}
.hover span {
  background: #f0f0f0;
}
.picked span {
  outline: 1px dotted #c60;
  outline-offset: -1px;
  background: #0078d7;
  color: #fff;
}
.choices input {
  display: grid;
  place-items: center;
  width: 10px;
  height: 10px;
  border: 1px solid #666;
  background: #fff;
  appearance: none;
}
.choices .mixed::before {
  width: 6px;
  height: 6px;
  background: #000;
  content: "";
}
.choices .on::before {
  width: 8px;
  height: 8px;
  background: #000;
  clip-path: polygon(0 45%, 35% 70%, 90% 0, 100% 15%, 40% 100%, 0 70%);
  content: "";
}
.actions {
  display: flex;
  justify-content: flex-end;
  gap: 9px;
  margin: 13px 6px 4px 0;
}
.actions button {
  width: 64px;
  height: 18px;
  border: 1px solid #adadad;
  background: #e1e1e1;
  line-height: 15px;
}
.actions .ok {
  border-color: #0078d7;
  background: #e5f1fb;
}
.shot-one .actions .ok {
  border-width: 2px;
  background: #e1e1e1;
  line-height: 13px;
}
.grip {
  display: flex;
  justify-content: flex-end;
  height: 10px;
  padding: 3px 3px 0 0;
  border-top: 1px solid #dbe6f0;
  background: linear-gradient(#fff, #e6e8ec);
}
.grip svg {
  width: 5px;
  height: 5px;
}

/* marks and notes over the windows */
.frame {
  position: absolute;
  border: 4px solid #ed1c24;
}
.shot-one .frame-choice { top: 378px; left: 37px; width: 75px; height: 36px; }
.shot-one .frame-confirm { top: 496px; left: 93px; width: 87px; height: 41px; }
.shot-two .frame-confirm { top: 499px; left: 146px; width: 77px; height: 36px; }
.shot-three .frame-choice { top: 277px; left: 37px; width: 99px; height: 32px; }
.shot-three .frame-confirm { top: 384px; left: 71px; width: 84px; height: 39px; }
.note {
  position: absolute;
  font-size: 18px;
  font-weight: 400;
  line-height: 24px;
  color: #111;
  white-space: pre;
}
.shot-one .note-1 { top: 380px; left: 255px; }
.shot-one .note-2 { top: 504px; left: 244px; }
.shot-two .note-1 { top: 421px; left: -4px; }
.shot-two .note-2 { top: 465px; left: 6px; }
.shot-three .note { color: #ed1c24; }
.shot-three .note-1 { top: 299px; left: 190px; }
.shot-three .note-2 { top: 327px; left: 190px; }

.arrow {
  display: block;
}
.arrow-one {
  grid-area: 3 / 3 / 7 / 4;
  width: 107px;
  margin: 397px 0 0 15px;
}
.arrow-two {
  grid-area: 3 / 5 / 7 / 6;
  width: 153px;
  margin: 454px 0 0 50px;
}
</style>
